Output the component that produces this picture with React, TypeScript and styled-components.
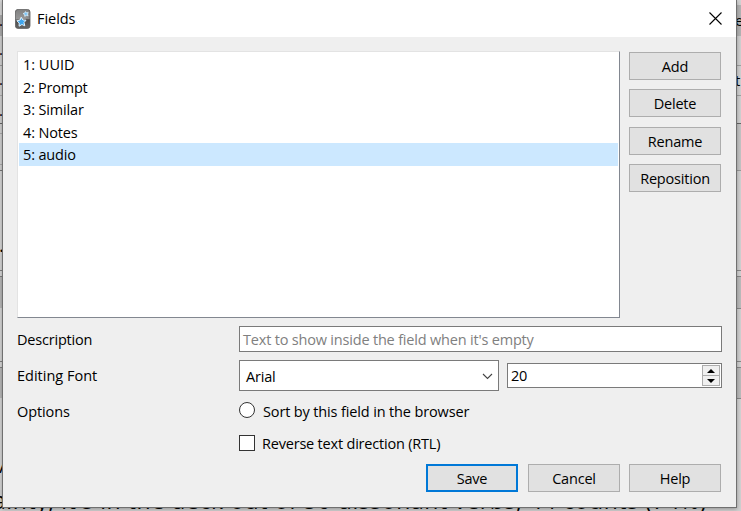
import React from "react";
import styled, { createGlobalStyle } from "styled-components";

const Global = createGlobalStyle`
  * { box-sizing: border-box; }
  html, body { margin: 0; padding: 0; overflow: hidden; }
  body { font-family: "Open Sans", "Noto Sans", sans-serif; font-size: 14.5px; color: #000; }
`;

const Desktop = styled.div`
  position: relative;
  width: 741px;
  height: 511px;
  overflow: hidden;
  background: #d0d0d0;
`;

/* Window that shows around the edges of the dialog */
const Behind = styled.div`
  display: flex;
  flex-direction: column;
  height: 511px;
`;

const Edges = styled.div`
  display: flex;
  justify-content: space-between;
  height: 490px;
`;

const Strip = styled.div`
  display: flex;
  flex-direction: column;
  width: 5px;
  background: #dadada;
`;

const Segment = styled.div<{ $height: number; $fill: string; $rule?: string; $line: number; $big: boolean }>`
  flex: none;
  height: ${(p) => p.$height}px;
  overflow: hidden;
  white-space: nowrap;
  font-size: ${(p) => (p.$big ? 20 : 15)}px;
  line-height: ${(p) => p.$line}px;
  text-indent: -1px;
  background: ${(p) => p.$fill};
  border-bottom: ${(p) => (p.$rule ? `1px solid ${p.$rule}` : "0")};
`;

const Sentence = styled.div`
  height: 21px;
  font-size: 23px;
  line-height: 20px;
  letter-spacing: 0.57px;
  text-indent: -7px;
  white-space: nowrap;
`;

const Dialog = styled.div`
  position: absolute;
  left: 2px;
  top: 0;
  width: 735px;
  height: 508px;
  display: flex;
  flex-direction: column;
  background: #efefef;
  border: 1px solid #707070;
  border-top: 0;
  box-shadow: 0 1px 4px rgba(0, 0, 0, 0.3);
`;

const TitleBar = styled.header`
  display: flex;
  align-items: center;
  height: 37px;
  padding: 0 14px 0 12px;
  background: #fff;

  svg { flex: none; }
`;

const Title = styled.div`
  flex: 1;
  margin-left: 6px;
`;

const Body = styled.main`
  display: flex;
  flex-direction: column;
  padding: 14px 14px 0;
`;

const Top = styled.section`
  display: flex;
  gap: 9px;
  height: 267px;
`;

const List = styled.ul`
  width: 603px;
  margin: 0;
  padding: 1px 1px 0;
  list-style: none;
  background: #fff;
  border: 1px solid #828790;
  border-left-color: #e3e3e3;
  border-top-color: #e3e3e3;
`;

const Item = styled.li<{ $selected?: boolean }>`
  height: 22.5px;
  padding-left: 4px;
  line-height: 24.8px;
  background: ${(p) => (p.$selected ? "#cce8ff" : "transparent")};
`;

const Side = styled.div`
  display: flex;
  flex-direction: column;
  gap: 9.4px;
  padding-top: 1px;
`;

const Button = styled.button<{ $primary?: boolean }>`
  flex: none;
  width: 92px;
  height: 28px;
  padding: 1px 0 0;
  font: inherit;
  color: #000;
  line-height: 23px;
  background: #e1e1e1;
  border: ${(p) => (p.$primary ? "2px solid #0078d7" : "1px solid #adadad")};
`;

const Text = styled.span<{ $ls?: number }>`
  white-space: pre;
  letter-spacing: ${(p) => p.$ls ?? -0.2}px;
`;

const Form = styled.section`
  display: grid;
  grid-template-columns: 222px 483px;
  grid-template-rows: 26px 33px 22px 30px;
  row-gap: 7px;
  align-items: center;
  margin-top: 8px;
`;

const Field = styled.div<{ $width?: number; $height: number; $pad: number }>`
  display: flex;
  align-items: center;
  justify-content: space-between;
  width: ${(p) => (p.$width ? p.$width + "px" : "100%")};
  height: ${(p) => p.$height}px;
  padding: 1px 1px 0 ${(p) => p.$pad}px;
  background: #fff;
  border: 1px solid #7a7a7a;
`;

const SpinField = styled(Field)`
  padding-top: 0;
`;

const Placeholder = styled(Text)`
  color: #808080;
`;

const FontRow = styled.div`
  display: flex;
  align-items: center;
  gap: 8px;
  height: 31px;
`;

const Chevron = styled.svg`
  margin-right: 4px;
`;

const Stepper = styled.div`
  display: flex;
  flex-direction: column;
  width: 18px;
  height: 21px;
`;

const Step = styled.div<{ $down?: boolean }>`
  display: flex;
  align-items: center;
  justify-content: center;
  height: ${(p) => (p.$down ? 10 : 11)}px;
  background: #f0f0f0;
  border: 1px solid #adadad;
  border-top-width: ${(p) => (p.$down ? 0 : 1)}px;
`;

const Option = styled.label<{ $gap: number }>`
  display: flex;
  align-items: center;
  gap: ${(p) => p.$gap}px;
`;

const OptionsLabel = styled.div`
  padding-top: 2px;
`;

const Mark = styled.span<{ $round?: boolean }>`
  width: 16px;
  height: 16px;
  background: #fff;
  border: 1px solid #333;
  border-radius: ${(p) => (p.$round ? "50%" : "0")};
`;

const SortText = styled(Text)`
  padding-top: 2px;
`;

const Footer = styled.footer`
  display: flex;
  margin: 6px 0 0 409px;

  > :nth-child(2) { margin: 0 9px 0 10px; }
`;

const AppIcon = () => (
  <svg width="16" height="20" viewBox="0 0 16 20">
    <defs>
      <linearGradient id="tile" x1="0" y1="0" x2="0" y2="1">
        <stop offset="0" stopColor="#6c6c6c" />
        <stop offset="0.48" stopColor="#8c8c8c" />
        <stop offset="0.55" stopColor="#4c4c4c" />
        <stop offset="1" stopColor="#666" />
      </linearGradient>
    </defs>
    <rect x="0.4" y="0.4" width="14.6" height="19" rx="2.6" fill="url(#tile)" stroke="#5c5c5c" strokeWidth="0.8" />
    <path d="M1 12 Q8 12 14.5 7 V3 Q14 1 12 1 H3 Q1 1 1 3Z" fill="#aaa" opacity="0.35" />
    <path d="M6.2 8.2 L7.9 11 L11 11.2 L9 13.6 L9.8 16.8 L6.9 15.5 L4.1 17.2 L4.2 14.1 L2 11.8 L5.1 11Z" fill="#3fa5ec" stroke="#e2f3ff" strokeWidth="1" strokeLinejoin="round" />
    <path d="M10.5 2.6 L11.4 3.8 L13.2 3.6 L12.4 5.1 L13 6.7 L11.2 6.3 L9.8 7.4 L9.6 5.6 L8.1 4.6 L9.8 4Z" fill="#7dc4f4" stroke="#d8effd" strokeWidth="0.8" strokeLinejoin="round" />
  </svg>
);

type Seg = { h: number; fill: string; rule?: string; text?: string; line?: number; big?: boolean };

const leftEdge: Seg[] = [
  { h: 15, fill: "#d6d6d6" },
  { h: 21, fill: "#acacac", text: ".", line: 10 },
  { h: 30, fill: "#d0d0d0", rule: "#999", text: ".", line: 27 },
  { h: 30, fill: "#d0d0d0", rule: "#aaa", text: ".", line: 26 },
  { h: 28, fill: "#d0d0d0", rule: "#666", text: ".", line: 29 },
  { h: 10, fill: "#d0d0d0", rule: "#aaa" },
  { h: 31, fill: "#d0d0d0", rule: "#aaa" },
  { h: 6, fill: "#d0d0d0", rule: "#777" },
  { h: 100, fill: "#d6d6d6", rule: "#808080", text: ".", line: 148, big: true },
  { h: 6, fill: "#d6d6d6", rule: "#808080" },
  { h: 31, fill: "#b9b9b9" },
  { h: 54, fill: "#d6d6d6", rule: "#808080" },
  { h: 6, fill: "#d6d6d6", rule: "#808080" },
  { h: 30, fill: "#b9b9b9" },
  { h: 92, fill: "#d6d6d6", text: "/", line: 136, big: true },
];

const rightEdge: Seg[] = [
  { h: 5, fill: "#d2d2d2" },
  { h: 31, fill: "#b3b3b3", text: "e", line: 31 },
  { h: 30, fill: "#d0d0d0", rule: "#a0a0a0" },
  { h: 30, fill: "#d0d0d0", rule: "#a0a0a0", text: "t", line: 29 },
  { h: 28, fill: "#d0d0d0", rule: "#666" },
  { h: 47, fill: "#c3c3c3", rule: "#999" },
  { h: 100, fill: "#d0d0d0", rule: "#888" },
  { h: 6, fill: "#d0d0d0", rule: "#888" },
  { h: 32, fill: "#bbb", rule: "#888" },
  { h: 53, fill: "#d0d0d0", rule: "#888" },
  { h: 6, fill: "#d0d0d0", rule: "#888" },
  { h: 31, fill: "#bbb", rule: "#888" },
  { h: 91, fill: "#d2d2d2" },
];

const Edge = ({ segments }: { segments: Seg[] }) => (
  <Strip>
    {segments.map((s, i) => (
      <Segment key={i} $height={s.h} $fill={s.fill} $rule={s.rule} $line={s.line ?? 20} $big={!!s.big}>
        {s.text}
      </Segment>
    ))}
  </Strip>
);

const fields: [string, number][] = [
  ["1: UUID", 0],
  ["2: Prompt", -0.25],
  ["3: Similar", -0.15],
  ["4: Notes", -0.15],
  ["5: audio", -0.15],
];

const actions = ["Add", "Delete", "Rename", "Reposition"];

export default function App() {
  return (
    <Desktop>
      <Global />
      <Behind>
        <Edges>
          <Edge segments={leftEdge} />
          <Edge segments={rightEdge} />
        </Edges>
        <Sentence>ainty, it's in the deck out of 50 dissonant verbs, 44 counts (74%)</Sentence>
      </Behind>
      <Dialog>
        <TitleBar>
          <AppIcon />
          <Title><Text $ls={-0.05}>Fields</Text></Title>
          <svg width="13" height="13" viewBox="0 0 13 13">
            <path d="M0.5 0.5 L12.5 12.5 M12.5 0.5 L0.5 12.5" stroke="#000" strokeWidth="1.1" />
          </svg>
        </TitleBar>
        <Body>
          <Top>
            <List>
              {fields.map(([name, ls], i) => (
                <Item key={name} $selected={i === 4}><Text $ls={ls}>{name}</Text></Item>
              ))}
            </List>
            <Side>
              {actions.map((name) => (
                <Button key={name}><Text>{name}</Text></Button>
              ))}
            </Side>
          </Top>
          <Form>
            <Text>Description</Text>
            <Field $height={26} $pad={3}>
              <Placeholder $ls={-0.19}>Text to show inside the field when it's empty</Placeholder>
            </Field>
            <Text $ls={0}>Editing Font</Text>
            <FontRow>
              <Field $width={260} $height={31} $pad={6}>
                <Text>Arial</Text>
                <Chevron width="11" height="7" viewBox="0 0 11 7">
                  <path d="M1 1 L5.5 5.5 L10 1" fill="none" stroke="#444" strokeWidth="1.1" />
                </Chevron>
              </Field>
              <SpinField $width={215} $height={25} $pad={3}>
                <Text $ls={-0.3}>20</Text>
                <Stepper>
                  <Step><svg width="8" height="4"><path d="M0 4 L4 0 L8 4Z" /></svg></Step>
                  <Step $down><svg width="8" height="4"><path d="M0 0 L4 4 L8 0Z" /></svg></Step>
                </Stepper>
              </SpinField>
            </FontRow>
            <OptionsLabel><Text $ls={-0.1}>Options</Text></OptionsLabel>
            <Option $gap={8}><Mark $round /><SortText $ls={-0.14}>Sort by this field in the browser</SortText></Option>
            <span />
            <Option $gap={7}><Mark /><Text>Reverse text direction (RTL)</Text></Option>
          </Form>
          <Footer>
            <Button $primary><Text>Save</Text></Button>
            <Button><Text>Cancel</Text></Button>
            <Button><Text>Help</Text></Button>
          </Footer>
        </Body>
      </Dialog>
    </Desktop>
  );
}
